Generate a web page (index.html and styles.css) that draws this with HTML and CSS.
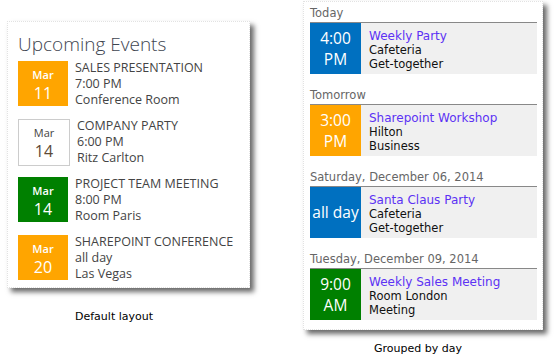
FILE: index.html
```html
<!DOCTYPE html>
<html lang="en">

<head>
  <meta charset="UTF-8">
  <title>events</title>
  <link rel="stylesheet" href="styles.css">
</head>

<body>
  <div class="page">
    <div class="column column-left">
      <div class="card card-default">
        <h1 class="title">Upcoming Events</h1>
        <div class="event">
          <div class="date orange"><span class="month">Mar</span><span class="day">11</span></div>
          <div class="info">
            <div class="name">SALES PRESENTATION</div>
            <div>7:00 PM</div>
            <div>Conference Room</div>
          </div>
        </div>
        <div class="event">
          <div class="date outline"><span class="month">Mar</span><span class="day">14</span></div>
          <div class="info">
            <div class="name">COMPANY PARTY</div>
            <div>6:00 PM</div>
            <div>Ritz Carlton</div>
          </div>
        </div>
        <div class="event">
          <div class="date green"><span class="month">Mar</span><span class="day">14</span></div>
          <div class="info">
            <div class="name">PROJECT TEAM MEETING</div>
            <div>8:00 PM</div>
            <div>Room Paris</div>
          </div>
        </div>
        <div class="event">
          <div class="date orange"><span class="month">Mar</span><span class="day">20</span></div>
          <div class="info">
            <div class="name">SHAREPOINT CONFERENCE</div>
            <div>all day</div>
            <div>Las Vegas</div>
          </div>
        </div>
      </div>
      <div class="caption caption-left">Default layout</div>
    </div>

    <div class="column column-right">
      <div class="card card-grouped">
        <div class="group">
          <div class="group-head">Today</div>
          <div class="item">
            <div class="time blue">4:00<br>PM</div>
            <div class="details">
              <div class="item-title">Weekly Party</div>
              <div>Cafeteria</div>
              <div>Get-together</div>
            </div>
          </div>
        </div>
        <div class="group">
          <div class="group-head">Tomorrow</div>
          <div class="item">
            <div class="time orange">3:00<br>PM</div>
            <div class="details">
              <div class="item-title">Sharepoint Workshop</div>
              <div>Hilton</div>
              <div>Business</div>
            </div>
          </div>
        </div>
        <div class="group">
          <div class="group-head">Saturday, December 06, 2014</div>
          <div class="item">
            <div class="time blue">all day</div>
            <div class="details">
              <div class="item-title">Santa Claus Party</div>
              <div>Cafeteria</div>
              <div>Get-together</div>
            </div>
          </div>
        </div>
        <div class="group">
          <div class="group-head">Tuesday, December 09, 2014</div>
          <div class="item">
            <div class="time green">9:00<br>AM</div>
            <div class="details">
              <div class="item-title">Weekly Sales Meeting</div>
              <div>Room London</div>
              <div>Meeting</div>
            </div>
          </div>
        </div>
      </div>
      <div class="caption caption-right">Grouped by day</div>
    </div>
  </div>
</body>

</html>
```

FILE: styles.css
```css
* {
  margin: 0;
  padding: 0;
  box-sizing: border-box;
}

body {
  background: #fff;
  width: 554px;
  height: 361px;
  overflow: hidden;
}

.page {
  display: flex;
}

.card {
  background: #fff;
  border: 1px dotted #e2e2e2;
  box-shadow: 4px 4px 5px #6a6a6a;
}

.caption {
  font-family: 'DejaVu Sans', sans-serif;
  font-size: 11px;
  color: #000;
}

/* default layout */
.column-left {
  margin: 21px 0 0 7px;
  width: 243px;
}

.card-default {
  height: 267px;
  padding: 9px 0 0 10px;
  font-family: 'Open Sans', sans-serif;
  color: #444;
}

.title {
  font-weight: 300;
  font-size: 19px;
  line-height: 26px;
  color: #3e4550;
  margin-bottom: 3px;
}

.event {
  display: flex;
  margin-bottom: 10px;
}

.date {
  width: 50px;
  height: 45px;
  margin-top: 1px;
  display: flex;
  flex-direction: column;
  align-items: center;
  color: #fff;
}

.date .month {
  font-size: 11px;
  font-weight: 600;
  line-height: 13px;
  margin-top: 7px;
}

.date .day {
  font-size: 16px;
  line-height: 20px;
  margin-top: 2px;
}

.date.outline {
  width: 52px;
  height: 47px;
  border: 1px solid #ccc;
  color: #444;
}

.date.outline .month {
  font-weight: 400;
  margin-top: 6px;
}

.date.outline .day {
  color: #5e4a36;
}

.info {
  margin-left: 7px;
  font-size: 12.5px;
  line-height: 16px;
}

.caption-left {
  margin: 22px 0 0 68px;
}

/* grouped by day */
.column-right {
  margin-left: 53px;
  margin-top: 1px;
  width: 240px;
}

.card-grouped {
  height: 329px;
  padding: 4px 5px 0 6px;
  font-family: 'DejaVu Sans', sans-serif;
}

.group {
  margin-bottom: 14px;
}

.group-head {
  font-size: 11.5px;
  line-height: 14px;
  color: #666;
  border-bottom: 1px solid #888;
  padding-bottom: 2px;
}

.item {
  display: flex;
  height: 51px;
  background: #f0f0f0;
}

.time {
  flex: none;
  width: 51px;
  display: flex;
  align-items: center;
  justify-content: center;
  text-align: center;
  white-space: nowrap;
  font-family: 'Open Sans', sans-serif;
  font-size: 15.5px;
  line-height: 21px;
  color: #fff;
}

.details {
  padding: 6px 0 0 8px;
  font-size: 11.5px;
  line-height: 14px;
  color: #111;
}

.details .item-title {
  font-size: 12px;
  color: #5c32f4;
}

.caption-right {
  margin: 12px 0 0 71px;
}

.orange {
  background: #ffa500;
}

.green {
  background: #008000;
}

.blue {
  background: #0070c0;
}
```
